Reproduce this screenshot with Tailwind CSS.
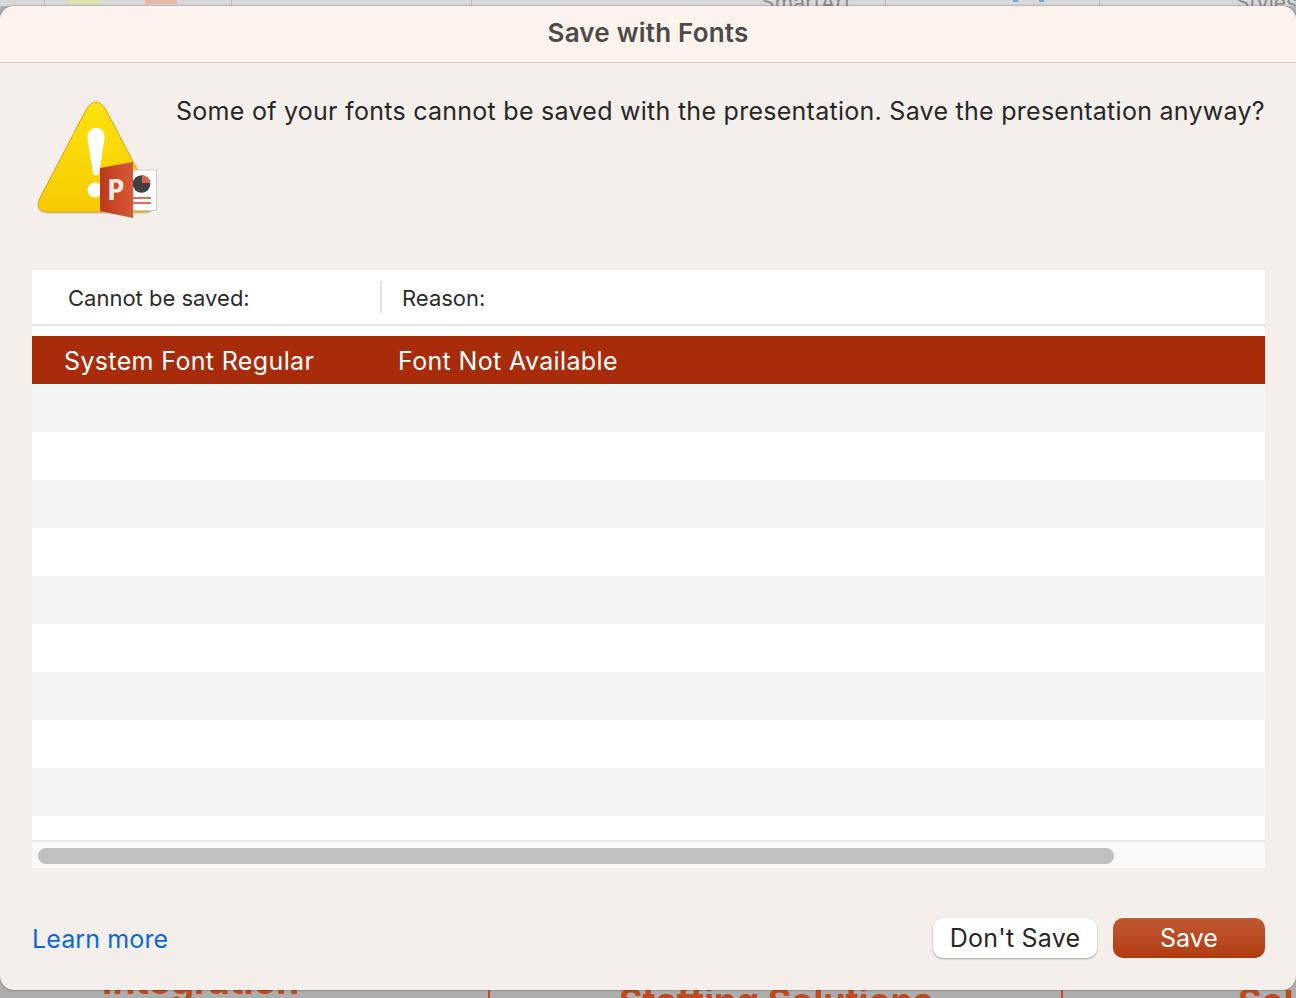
<!DOCTYPE html>
<html lang="en">
<head>
<meta charset="utf-8">
<title>Save with Fonts</title>
<script src="https://cdn.jsdelivr.net/npm/@tailwindcss/browser@4"></script>
</head>
<body class="relative w-[1296px] h-[998px] overflow-hidden bg-[#b0b0b0] font-['Inter','Liberation_Sans',sans-serif]">
  <!-- Slide and ribbon showing behind the sheet -->
  <div class="absolute inset-x-0 top-0 h-[6px] bg-[#d8d8d8] overflow-hidden">
    <div class="absolute left-[69px] top-0 w-[32px] h-[4px] bg-[#e2e2ae]"></div>
    <div class="absolute left-[145px] top-0 w-[32px] h-[4px] bg-[#e6b8ac]"></div>
    <div class="absolute left-[44px] top-0 w-px h-full bg-[#b8b8b8]"></div>
    <div class="absolute left-[231px] top-0 w-px h-full bg-[#b8b8b8]"></div>
    <div class="absolute left-[471px] top-0 w-px h-full bg-[#b8b8b8]"></div>
    <div class="absolute left-[885px] top-0 w-px h-full bg-[#b8b8b8]"></div>
    <div class="absolute left-[1099px] top-0 w-px h-full bg-[#b8b8b8]"></div>
    <div class="absolute left-[1013px] top-0 w-[5px] h-[2px] bg-[#6aa9dc]"></div>
    <div class="absolute left-[1039px] top-0 w-[5px] h-[2px] bg-[#6aa9dc]"></div>
    <span class="absolute left-[761px] top-[-9px] text-[21px] leading-[24px] tracking-[0.2px] text-[#8a8a8a]">SmartArt</span>
    <span class="absolute left-[1236px] top-[-9px] text-[21px] leading-[24px] text-[#8a8a8a]">Styles</span>
  </div>
  <div class="absolute inset-x-0 bottom-0 h-[8px] overflow-hidden bg-[#adadad]">
    <span class="absolute left-[102px] top-[-29px] text-[37px] leading-[40px] font-bold text-[#bd4a1f]">Integration</span>
    <span class="absolute left-[619px] top-[-8px] text-[36px] leading-[38px] font-bold text-[#bd4a1f]">Staffing Solutions</span>
    <span class="absolute left-[1238px] top-[-8px] text-[36px] leading-[38px] font-bold text-[#bd4a1f]">Sol</span>
    <div class="absolute left-[488px] top-0 w-[2px] h-full bg-[#c04d22]"></div>
    <div class="absolute left-[1061px] top-0 w-[2px] h-full bg-[#c04d22]"></div>
  </div>

  <!-- Sheet -->
  <div class="absolute left-0 top-[6px] w-[1296px] h-[984px] rounded-[14px] overflow-hidden bg-[#f4efeb] shadow-[0_0_2px_rgba(0,0,0,0.55)] flex flex-col">
    <header class="h-[57px] shrink-0 flex items-center justify-center pb-[2px] bg-[#fdf3ed] border-b border-[#cfcac6]">
      <h1 class="text-[26px] font-semibold leading-none text-[#4c4b4a] tracking-[0.2px]">Save with Fonts</h1>
    </header>

    <div class="flex-1 flex flex-col pl-[32px] pr-[31px]">
      <div class="h-[207px] shrink-0 flex">
        <svg class="w-[144px] h-[207px] shrink-0" viewBox="32 63 144 207" aria-hidden="true">
          <defs>
            <linearGradient id="tri" x1="0" y1="0" x2="0" y2="1">
              <stop offset="0" stop-color="#fde20c"/>
              <stop offset="1" stop-color="#f7cb00"/>
            </linearGradient>
            <linearGradient id="ppt" x1="0" y1="0" x2="1" y2="0">
              <stop offset="0" stop-color="#b93a17"/>
              <stop offset="1" stop-color="#d9583a"/>
            </linearGradient>
          </defs>
          <path d="M86 110 Q96 94 106 110 L151 196 Q160 212 142 212 L50 212 Q32 212 41 196 Z" fill="#000000" opacity="0.12" transform="translate(0 2)"/>
          <path d="M86 110 Q96 94 106 110 L151 196 Q160 212 142 212 L50 212 Q32 212 41 196 Z" fill="url(#tri)" stroke="#d2a21a" stroke-width="1"/>
          <path d="M87.500 139 C87 131 91 128 96 128 C101 128 105 131 104.500 139 L99 174 Q96 177 93 174 Z" fill="#ffffff"/>
          <circle cx="95" cy="190" r="7.500" fill="#ffffff"/>
          <rect x="128" y="170" width="28.500" height="40.500" fill="#ffffff" stroke="#c8c4c0" stroke-width="0.800"/>
          <circle cx="141.500" cy="184" r="8.800" fill="#404040"/>
          <path d="M142 175 A8.800 8.800 0 0 1 150.300 183 L142 183 Z" fill="#d9654c"/>
          <rect x="133" y="197" width="18" height="2" fill="#df6f58"/>
          <rect x="133" y="202" width="18" height="2" fill="#df6f58"/>
          <path d="M100 168 L133 162 L133 218 L100 211 Z" fill="url(#ppt)"/>
          <text x="107" y="200" font-family="'Open Sans','Noto Sans',sans-serif" font-size="28" font-weight="700" fill="#fbe9e2">P</text>
        </svg>
        <p class="pt-[33px] text-[25px] leading-[30px] tracking-[0.27px] text-[#272727] whitespace-nowrap">Some of your fonts cannot be saved with the presentation. Save the presentation anyway?</p>
      </div>

      <!-- Table -->
      <div class="h-[598px] shrink-0 bg-white flex flex-col">
        <div class="h-[56px] shrink-0 flex items-center border-b-2 border-[#e4e4e4] text-[22px] text-[#2b2b2b]">
          <span class="w-[348px] pl-[36px] pt-[2px]">Cannot be saved:</span>
          <span class="w-[2px] h-[32px] bg-[#e2e2e2]"></span>
          <span class="pl-[20px] pt-[2px]">Reason:</span>
        </div>
        <div class="h-[10px] shrink-0"></div>
        <div class="h-[48px] shrink-0 flex items-center bg-[#a82c0a] text-[25px] tracking-[0.36px] text-white">
          <span class="w-[366px] pl-[32px] pt-[3px]">System Font Regular</span>
          <span class="pt-[3px]">Font Not Available</span>
        </div>
        <div class="h-[48px] shrink-0 bg-[#f3f5f4]"></div>
        <div class="h-[48px] shrink-0 bg-white"></div>
        <div class="h-[48px] shrink-0 bg-[#f3f5f4]"></div>
        <div class="h-[48px] shrink-0 bg-white"></div>
        <div class="h-[48px] shrink-0 bg-[#f3f5f4]"></div>
        <div class="h-[48px] shrink-0 bg-white"></div>
        <div class="h-[48px] shrink-0 bg-[#f3f5f4]"></div>
        <div class="h-[48px] shrink-0 bg-white"></div>
        <div class="h-[48px] shrink-0 bg-[#f3f5f4]"></div>
        <div class="flex-1 bg-white"></div>
        <div class="h-[28px] shrink-0 bg-[#fafafa] border-t-2 border-[#e8e8e8] pl-[6px] pt-[6px]">
          <div class="w-[1076px] h-[16px] rounded-full bg-[#c0c0c0]"></div>
        </div>
      </div>

      <!-- Footer -->
      <div class="flex-1 flex items-start justify-between pt-[50px]">
        <a class="text-[25px] leading-[42px] tracking-[0.12px] text-[#0a68dc]">Learn more</a>
        <div class="flex gap-[16px]">
          <button class="w-[164px] h-[40px] rounded-[10px] bg-white text-[25px] leading-none tracking-[0.2px] text-[#272727] shadow-[0_1px_2px_rgba(0,0,0,0.35)]">Don't Save</button>
          <button class="w-[152px] h-[40px] rounded-[10px] bg-gradient-to-b from-[#c05a33] to-[#b23a0c] text-[25px] leading-none text-white">Save</button>
        </div>
      </div>
    </div>
  </div>
</body>
</html>
